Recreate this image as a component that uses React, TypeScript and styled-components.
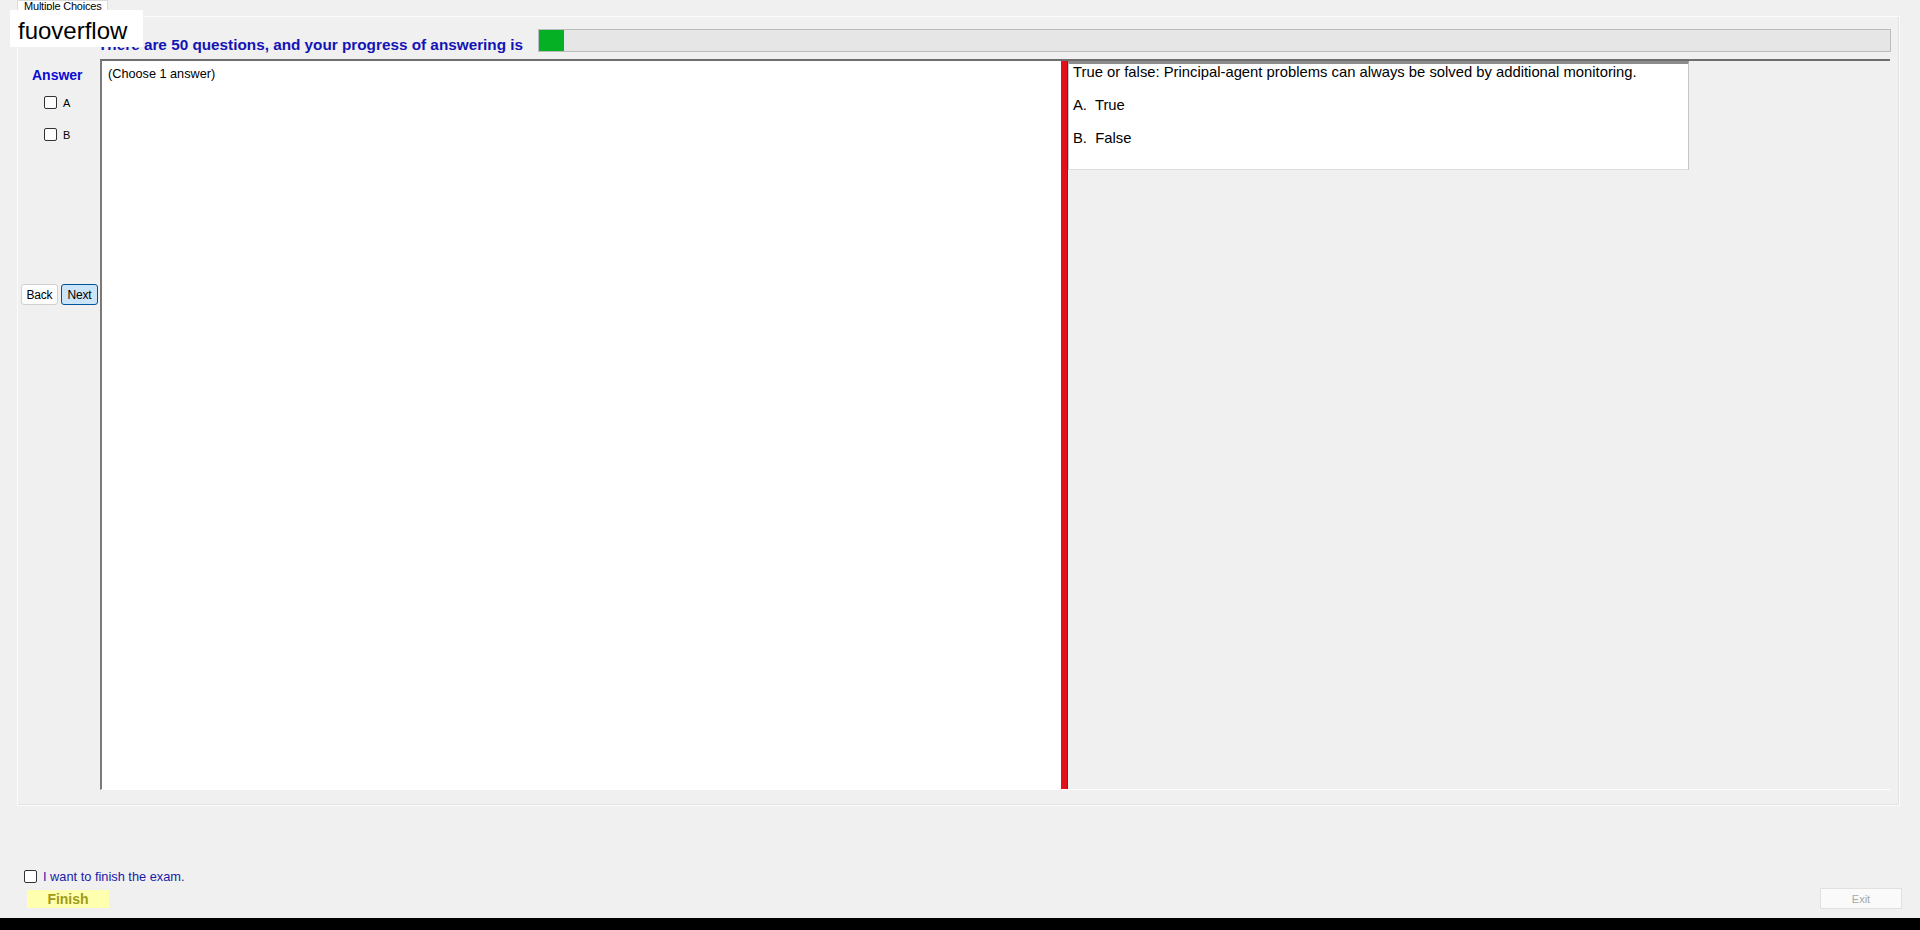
import React, { useState } from 'react'
import styled, { createGlobalStyle } from 'styled-components'

const GlobalStyle = createGlobalStyle`
  html, body {
    margin: 0;
    padding: 0;
    background: #f0f0f0;
    font-family: "Liberation Sans", Arial, sans-serif;
  }
  * { box-sizing: border-box; }
`

const Window = styled.div`
  position: relative;
  width: 1920px;
  height: 930px;
  display: flex;
  flex-direction: column;
  background: #f0f0f0;
  overflow: hidden;
`

const Brand = styled.div`
  position: absolute;
  left: 10px;
  top: 10px;
  width: 133px;
  height: 37px;
  background: #fff;
  padding: 4px 0 0 8px;
  font-size: 24px;
  line-height: 33px;
  color: #000;
  z-index: 5;
`

const TabStrip = styled.div`
  height: 16px;
  padding-left: 17px;
  display: flex;
`

const Tab = styled.div`
  width: 91px;
  height: 16px;
  padding-left: 6px;
  background: #fff;
  border: 1px solid #dadada;
  border-bottom: none;
  font-size: 11px;
  line-height: 11px;
  letter-spacing: -0.2px;
  color: #000;
  overflow: hidden;
  white-space: nowrap;
`

const TabPage = styled.div`
  margin-left: 17px;
  width: 1883px;
  height: 790px;
  border: 1px solid #fbfbfb;
  box-shadow: inset -1px -1px 0 #e2e2e2;
  display: flex;
  flex-direction: column;
`

const HeaderRow = styled.div`
  height: 42px;
  display: flex;
  align-items: flex-start;
  padding-left: 80px;
`

const ProgressText = styled.div`
  margin-top: 19px;
  width: 440px;
  font-size: 15.3px;
  line-height: 18px;
  font-weight: bold;
  color: #1414b4;
  white-space: nowrap;
`

const ProgressBar = styled.div`
  margin-top: 12px;
  width: 1353px;
  height: 23px;
  border: 1px solid #bcbcbc;
  background: #e6e6e6;
  display: flex;
`

const ProgressFill = styled.div`
  height: 100%;
  background: #06b025;
`

const Body = styled.div`
  height: 731px;
  display: flex;
`

const AnswerCol = styled.div`
  width: 82px;
  display: flex;
  flex-direction: column;
`

const AnswerTitle = styled.div`
  margin-top: 7px;
  padding-left: 14px;
  font-size: 14px;
  line-height: 18px;
  font-weight: bold;
  color: #0a0ad2;
`

const OptionRow = styled.label<{ first?: boolean }>`
  display: flex;
  align-items: center;
  gap: 6px;
  height: 13px;
  margin-top: ${({ first }) => (first ? '12px' : '19px')};
  padding-left: 26px;
  font-size: 11px;
  color: #000;
`

const Box = styled.input.attrs({ type: 'checkbox' })`
  appearance: none;
  margin: 0;
  width: 13px;
  height: 13px;
  border: 1px solid #333;
  border-radius: 2px;
  background: #fff;
  flex: none;
  &:checked {
    background: #0067c0;
    border-color: #0067c0;
  }
`

const NavRow = styled.div`
  margin-top: 143px;
  padding-left: 3px;
  display: flex;
  gap: 3px;
`

const NavButton = styled.button<{ active?: boolean }>`
  width: 37px;
  height: 21px;
  padding: 0;
  font-family: inherit;
  font-size: 12px;
  letter-spacing: -0.2px;
  color: #000;
  background: ${({ active }) => (active ? '#cce4f7' : '#fdfdfd')};
  border: 1px solid ${({ active }) => (active ? '#005499' : '#d0d0d0')};
  border-radius: 3px;
`

const Content = styled.div`
  width: 1790px;
  display: flex;
  border-top: 2px solid #6e6e6e;
  border-left: 2px solid #7a7a7a;
  border-bottom: 1px solid #fff;
`

const LeftPane = styled.div`
  width: 959px;
  background: #fff;
  padding: 5px 6px;
  font-size: 12.7px;
  line-height: 16px;
  color: #000;
`

const Splitter = styled.div`
  width: 7px;
  background: #e3101c;
  border-right: 1px solid #3c3c3c;
`

const RightPane = styled.div`
  flex: 1;
  background: #f0f0f0;
`

const QuestionBox = styled.div`
  width: 621px;
  height: 109px;
  background: #fff;
  border-top: 3px solid #8c8c8c;
  border-left: 1px solid #c6c6c6;
  border-right: 1px solid #c6c6c6;
  border-bottom: 1px solid #dcdcdc;
  padding: 0 0 0 4px;
`

const QuestionLine = styled.div`
  font-size: 14.8px;
  line-height: 17px;
  color: #000;
  white-space: pre;
  & + & {
    margin-top: 16px;
  }
`

const Footer = styled.div`
  height: 112px;
  display: flex;
  justify-content: space-between;
  align-items: flex-end;
  padding: 0 18px 9px 24px;
`

const FinishCol = styled.div`
  display: flex;
  flex-direction: column;
  padding-bottom: 1px;
`

const ConfirmRow = styled.label`
  display: flex;
  align-items: center;
  gap: 6px;
  font-size: 12.8px;
  line-height: 15px;
  color: #1a1aa8;
`

const FinishButton = styled.button`
  margin: 6px 0 0 3px;
  width: 82px;
  height: 18px;
  padding: 0;
  border: none;
  background: #ffffb0;
  font-family: inherit;
  font-size: 14px;
  font-weight: bold;
  color: #9c9c14;
`

const ExitButton = styled.button`
  width: 82px;
  height: 21px;
  padding: 0;
  border: 1px solid #e0e0e0;
  background: #fafafa;
  font-family: inherit;
  font-size: 11px;
  color: #a8a8a8;
`

const BottomBar = styled.div`
  height: 12px;
  background: #000;
`

const TOTAL = 50
const ANSWERED = 1

const App = () => {
  const [picked, setPicked] = useState<string[]>([])
  const [confirm, setConfirm] = useState(false)
  const toggle = (k: string) =>
    setPicked(p => (p.includes(k) ? p.filter(x => x !== k) : [...p, k]))

  return (
    <>
      <GlobalStyle />
      <Window>
        <Brand>fuoverflow</Brand>
        <TabStrip>
          <Tab>Multiple Choices</Tab>
        </TabStrip>
        <TabPage>
          <HeaderRow>
            <ProgressText>There are {TOTAL} questions, and your progress of answering is</ProgressText>
            <ProgressBar>
              <ProgressFill style={{ width: `${(ANSWERED / TOTAL) * 1250}px` }} />
            </ProgressBar>
          </HeaderRow>
          <Body>
            <AnswerCol>
              <AnswerTitle>Answer</AnswerTitle>
              <OptionRow first>
                <Box checked={picked.includes('A')} onChange={() => toggle('A')} />A
              </OptionRow>
              <OptionRow>
                <Box checked={picked.includes('B')} onChange={() => toggle('B')} />B
              </OptionRow>
              <NavRow>
                <NavButton>Back</NavButton>
                <NavButton active>Next</NavButton>
              </NavRow>
            </AnswerCol>
            <Content>
              <LeftPane>(Choose 1 answer)</LeftPane>
              <Splitter />
              <RightPane>
                <QuestionBox>
                  <QuestionLine>True or false: Principal-agent problems can always be solved by additional monitoring.</QuestionLine>
                  <QuestionLine>A.  True</QuestionLine>
                  <QuestionLine>B.  False</QuestionLine>
                </QuestionBox>
              </RightPane>
            </Content>
          </Body>
        </TabPage>
        <Footer>
          <FinishCol>
            <ConfirmRow>
              <Box checked={confirm} onChange={() => setConfirm(!confirm)} />
              I want to finish the exam.
            </ConfirmRow>
            <FinishButton>Finish</FinishButton>
          </FinishCol>
          <ExitButton disabled>Exit</ExitButton>
        </Footer>
        <BottomBar />
      </Window>
    </>
  )
}

export default App
